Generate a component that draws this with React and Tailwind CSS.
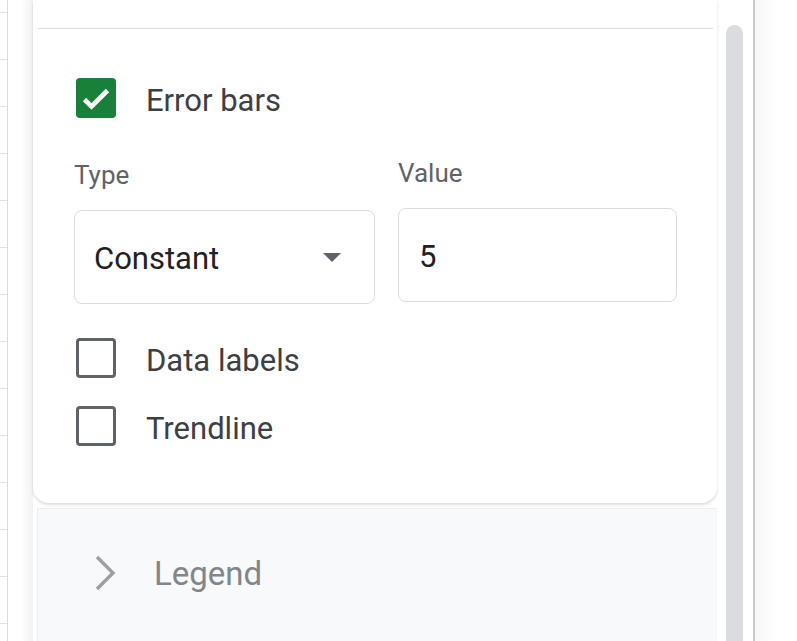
import React from "react";

const gridRows = Array.from({ length: 14 });

const Checkbox = ({ checked }) =>
  checked ? (
    <div className="w-[40px] h-[40px] rounded-[4px] bg-[#188038] flex items-center justify-center shrink-0">
      <svg width="40" height="40" viewBox="0 0 40 40">
        <polyline points="8.5,21.5 15.5,28.5 31.5,12.5" fill="none" stroke="#ffffff" strokeWidth="4.6" />
      </svg>
    </div>
  ) : (
    <div className="w-[40px] h-[40px] rounded-[4px] border-[3px] border-[#5f6368] shrink-0" />
  );

const App = () => {
  return (
    <div className="w-[797px] h-[641px] flex bg-white overflow-hidden font-['Roboto',sans-serif]">
      {/* spreadsheet edge */}
      <div className="w-[8px] h-full flex flex-col border-r-[1.5px] border-[#dadce0]">
        <div className="h-[13px] shrink-0 border-b border-[#e3e3e3]" />
        {gridRows.map((_, i) => (
          <div key={i} className="h-[47px] shrink-0 border-b border-[#e3e3e3]" />
        ))}
      </div>
      <div className="w-[25px] h-full bg-gradient-to-r from-white via-white to-[#f2f2f2]" />

      {/* side panel */}
      <div className="w-[684px] h-full flex flex-col">
        <div className="bg-white rounded-b-[16px] shadow-[0_2px_3px_rgba(60,64,67,0.18)] flex flex-col">
          <div className="h-[28px]" />
          <div className="h-px bg-[#dadce0] ml-[5px] mr-[4px]" />

          <div className="flex flex-col pl-[41px] pb-[57px]">
            <div className="flex items-center gap-[30px] mt-[49px] ml-[2px]">
              <Checkbox checked />
              <span className="text-[31px] leading-none text-[#3c4043] mt-[5px]">Error bars</span>
            </div>

            <div className="flex gap-[23px] mt-[40px]">
              <div className="flex flex-col w-[301px] pt-[2px]">
                <span className="text-[26px] leading-[30px] text-[#5f6368]">Type</span>
                <div className="mt-[20px] h-[94px] border border-[#dadce0] rounded-[8px] flex items-center justify-between pl-[19px] pr-[33px]">
                  <span className="text-[31px] leading-none text-[#202124] mt-[2px]">Constant</span>
                  <svg width="18" height="9" viewBox="0 0 18 9">
                    <polygon points="0,0 18,0 9,9" fill="#5f6368" />
                  </svg>
                </div>
              </div>
              <div className="flex flex-col w-[279px]">
                <span className="text-[26px] leading-[30px] text-[#5f6368]">Value</span>
                <div className="mt-[20px] h-[94px] border border-[#dadce0] rounded-[8px] flex items-center pl-[20px]">
                  <span className="text-[31px] leading-none text-[#202124] mt-[2px]">5</span>
                </div>
              </div>
            </div>

            <div className="flex items-center gap-[30px] mt-[34px] ml-[2px]">
              <Checkbox />
              <span className="text-[31px] leading-none text-[#3c4043] mt-[5px]">Data labels</span>
            </div>
            <div className="flex items-center gap-[30px] mt-[28px] ml-[2px]">
              <Checkbox />
              <span className="text-[31px] leading-none text-[#3c4043] mt-[5px]">Trendline</span>
            </div>
          </div>
        </div>

        <div className="flex-1 mt-[5px] ml-[4px] bg-[#f8f9fa] border-l border-t border-[#eceef0] pt-[44px]">
          <div className="flex items-center h-[40px] pl-[55px] gap-[37px]">
            <svg width="24" height="36" viewBox="0 0 24 36">
              <polyline points="4,2 20,18 4,34" fill="none" stroke="#9aa0a6" strokeWidth="3.4" />
            </svg>
            <span className="text-[33px] leading-none text-[#80868b]">Legend</span>
          </div>
        </div>
      </div>

      <div className="w-[9px]" />
      {/* scrollbar */}
      <div className="w-[17px] mt-[25px] rounded-t-full bg-[#dadce0]" />
      <div className="w-[10px]" />
      <div className="w-[2px] h-full bg-[#c8c9cc]" />
      <div className="flex-1 h-full bg-gradient-to-r from-[#f7f7f7] via-white to-white" />
    </div>
  );
};

export default App;
